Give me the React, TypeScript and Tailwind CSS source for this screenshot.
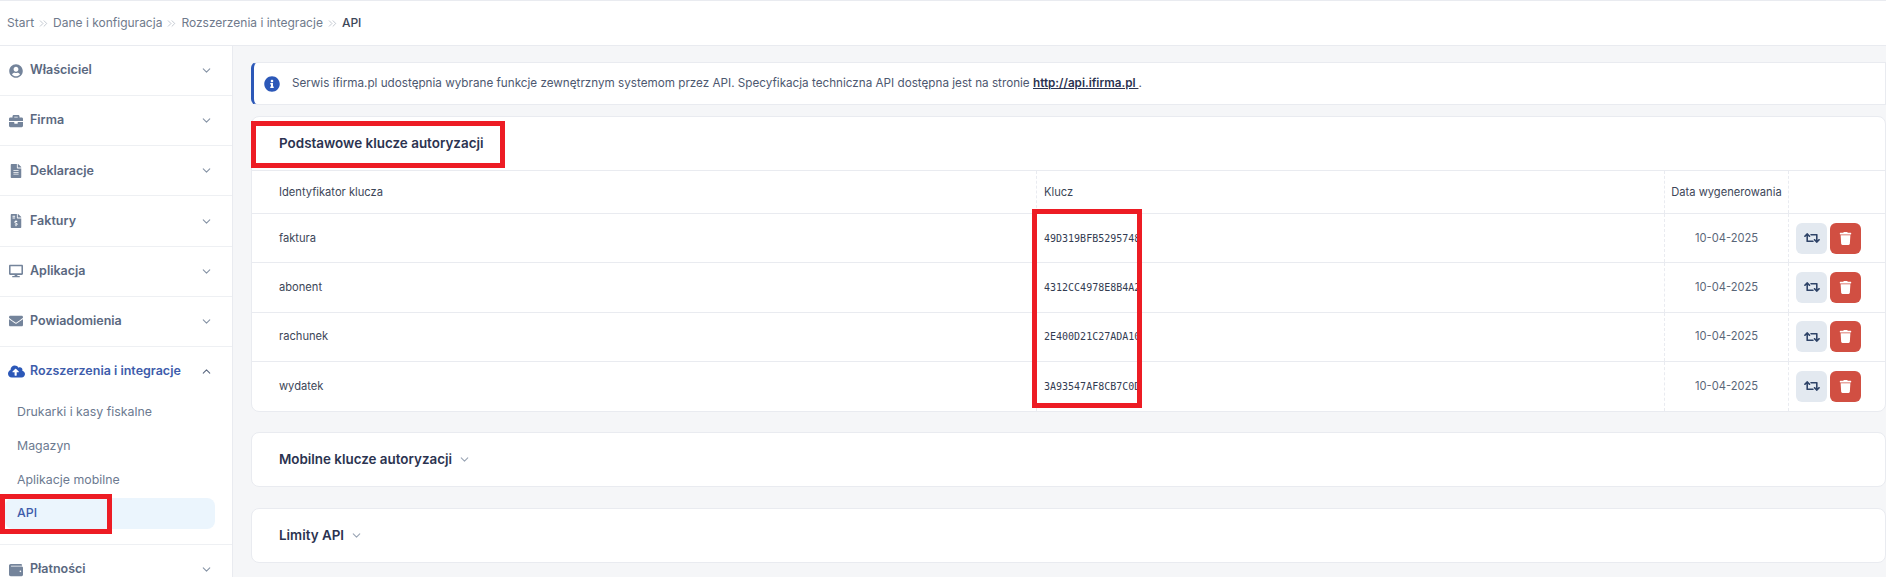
import { ChevronDown, ChevronUp, ChevronsRight } from "lucide-react";
import type { IconType } from "react-icons";
import {
  FaBriefcase,
  FaCloudUploadAlt,
  FaDesktop,
  FaEnvelope,
  FaFileAlt,
  FaFileInvoiceDollar,
  FaInfoCircle,
  FaRetweet,
  FaTrash,
  FaUserCircle,
  FaWallet,
} from "react-icons/fa";

const crumbs = ["Start", "Dane i konfiguracja", "Rozszerzenia i integracje"];

const topItems: { label: string; icon: IconType }[] = [
  { label: "Właściciel", icon: FaUserCircle },
  { label: "Firma", icon: FaBriefcase },
  { label: "Deklaracje", icon: FaFileAlt },
  { label: "Faktury", icon: FaFileInvoiceDollar },
  { label: "Aplikacja", icon: FaDesktop },
  { label: "Powiadomienia", icon: FaEnvelope },
];

const keys = [
  { id: "faktura", key: "49D319BFB5295748" },
  { id: "abonent", key: "4312CC4978E8B4A2" },
  { id: "rachunek", key: "2E400D21C27ADA10" },
  { id: "wydatek", key: "3A93547AF8CB7C0D" },
];

const SideItem = ({ label, icon: Icon }: { label: string; icon: IconType }) => (
  <div className="flex h-[50.17px] items-center border-b border-[#eef0f3] pl-[9px] pr-[19px]">
    <span className="flex w-[21px] shrink-0 justify-start">
      <Icon className="size-[14px] text-[#74849b]" />
    </span>
    <span className="text-[12.5px] font-semibold text-[#5a6880]">{label}</span>
    <ChevronDown className="ml-auto size-[13px] text-[#8794a6]" />
  </div>
);

const CollapsedCard = ({ title, className }: { title: string; className: string }) => (
  <div className={`flex h-[55px] items-center rounded-[8px] border border-[#e9ebf0] bg-white pl-[27px] ${className}`}>
    <span className="text-[13.4px] font-semibold text-[#2b3350]">{title}</span>
    <ChevronDown className="ml-[6px] size-[13px] text-[#9aa5b5]" />
  </div>
);

export default function App() {
  return (
    <div className="relative h-[577px] overflow-hidden bg-[#f5f6f8] font-['Inter',sans-serif]">
      <div className="flex h-[46px] items-center gap-[3px] border-y border-[#e9ebf0] bg-white pl-[7px] text-[12px] text-[#6f7a8c]">
        {crumbs.map((c) => (
          <span key={c} className="flex items-center gap-[3px]">
            {c}
            <ChevronsRight className="size-[13px] text-[#a8b0bc]" strokeWidth={1.25} />
          </span>
        ))}
        <span className="font-medium text-[#3c4658]">API</span>
      </div>

      <div className="flex">
        <aside className="relative h-[531px] w-[233px] shrink-0 border-r border-[#e9ebf0] bg-white">
          {topItems.map((i) => (
            <SideItem key={i.label} label={i.label} icon={i.icon} />
          ))}
          <div className="border-b border-[#eef0f3] pb-[15px]">
            <div className="flex h-[49px] items-center pl-[8px] pr-[19px]">
              <span className="flex w-[22px] shrink-0">
                <FaCloudUploadAlt className="size-[17px] text-[#2c58b8]" />
              </span>
              <span className="text-[12.5px] font-semibold text-[#3d5cab]">Rozszerzenia i integracje</span>
              <ChevronUp className="ml-auto size-[13px] text-[#5a6880]" />
            </div>
            <div className="text-[12.35px] text-[#6c7a90]">
              <div className="flex h-[34px] items-center pb-[2px] pl-[17px]">Drukarki i kasy fiskalne</div>
              <div className="flex h-[34px] items-center pb-[2px] pl-[17px]">Magazyn</div>
              <div className="flex h-[34px] items-center pb-[2px] pl-[17px]">Aplikacje mobilne</div>
              <div className="ml-[5px] mr-[17px] flex h-[31px] items-center rounded-[8px] bg-[#ebf5fd] pl-[12px] font-medium text-[#3d5cab]">
                API
              </div>
            </div>
          </div>
          <SideItem label="Płatności" icon={FaWallet} />
        </aside>

        <main className="min-w-0 flex-1 pl-[18px] pt-[16px]">
          <div className="flex h-[43px] items-center rounded-l-[6px] border border-l-[3px] border-[#e9ebf0] border-l-[#2c58b8] bg-white pl-[10px] text-[11.7px] text-[#4d5870]">
            <FaInfoCircle className="mr-[12px] size-[16px] text-[#2c58b8]" />
            <span>
              Serwis ifirma.pl udostępnia wybrane funkcje zewnętrznym systemom przez API. Specyfikacja techniczna API
              dostępna jest na stronie <a className="font-semibold text-[#2b3350] underline">http://api.ifirma.pl </a>.
            </span>
          </div>

          <div className="mt-[11px] overflow-hidden rounded-[8px] border border-[#e9ebf0] bg-white">
            <div className="flex h-[54px] items-center border-b border-[#e9ebf0] pl-[27px] text-[13.45px] font-semibold text-[#2b3350]">
              Podstawowe klucze autoryzacji
            </div>
            <div className="grid h-[43px] grid-cols-[785px_628px_124px_1fr] border-b border-[#e9ebf0] text-[11.15px] text-[#3c4658]">
              <div className="flex items-center border-r border-dashed border-[#e9ebf0] pl-[27px]">Identyfikator klucza</div>
              <div className="flex items-center border-r border-dashed border-[#e9ebf0] pl-[7px]">Klucz</div>
              <div className="flex items-center justify-center border-r border-dashed border-[#e9ebf0]">Data wygenerowania</div>
              <div />
            </div>
            {keys.map((k) => (
              <div
                key={k.id}
                className="grid h-[49.25px] grid-cols-[785px_628px_124px_1fr] border-b border-[#e9ebf0] text-[11.15px] text-[#3c4658] last:border-b-0"
              >
                <div className="flex items-center border-r border-dashed border-[#e9ebf0] pl-[27px]">{k.id}</div>
                <div className="flex items-center border-r border-dashed border-[#e9ebf0] pl-[7px]">
                  <span className="font-['DejaVu_Sans_Mono',monospace] text-[10px] whitespace-nowrap text-[#333c52]">
                    {k.key}
                  </span>
                </div>
                <div className="flex items-center justify-center border-r border-dashed border-[#e9ebf0] text-[#5a6678]">10-04-2025</div>
                <div className="flex items-center gap-[3px] pl-[7px]">
                  <button className="flex size-[31px] items-center justify-center rounded-[6px] bg-[#e3e9f0]">
                    <FaRetweet className="size-[16px] text-[#2f4468]" />
                  </button>
                  <button className="flex size-[31px] items-center justify-center rounded-[6px] bg-[#d14f42]">
                    <FaTrash className="size-[13px] text-white" />
                  </button>
                </div>
              </div>
            ))}
          </div>

          <CollapsedCard title="Mobilne klucze autoryzacji" className="mt-[20px]" />
          <CollapsedCard title="Limity API" className="mt-[21px]" />
        </main>
      </div>

      {/* red marks drawn over the screenshot */}
      <div className="absolute left-[251px] top-[121px] h-[47px] w-[254px] border-[5px] border-[#ed1c24]" />
      <div className="absolute left-[1032px] top-[209px] h-[199px] w-[110px] border-[5px] border-[#ed1c24]" />
      <div className="absolute left-0 top-[494px] h-[40px] w-[112px] border-[5px] border-[#ed1c24]" />
    </div>
  );
}
